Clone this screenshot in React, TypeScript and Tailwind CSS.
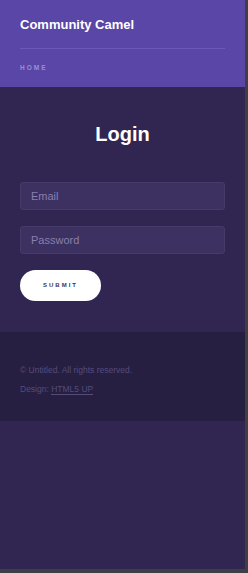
import React from "react";

export default function App() {
  return (
    <div
      className="h-[573px] w-[248px] flex flex-col bg-[#312651] border-r-[3px] border-b-[4px] border-[#3f3d45]"
      style={{ fontFamily: '"Liberation Sans", Arial, sans-serif' }}
    >
      {/* header */}
      <header className="h-[87px] shrink-0 bg-[#5a46a6] px-5 pt-[16px]">
        <h1 className="text-[13px] font-bold text-white leading-[18px]">Community Camel</h1>
        <div className="mt-[14px] h-px bg-[#6c58b6]" />
        <nav className="mt-[15px] leading-[8px]">
          <span className="block text-[6.5px] leading-[8px] font-bold tracking-[2px] text-[#9a8dd6]">HOME</span>
        </nav>
      </header>

      {/* login */}
      <main className="h-[245px] shrink-0 px-5 pt-[33px]">
        <h2 className="text-center text-[20px] font-bold text-white leading-[28px]">Login</h2>
        <form className="mt-[34px] flex flex-col gap-4" onSubmit={(e) => e.preventDefault()}>
          <input
            type="email"
            placeholder="Email"
            className="h-[28px] w-full rounded-[3px] border border-[#463b69] bg-[#3c3160] px-[10px] text-[11px] text-white placeholder:text-[#8a7fae] outline-none"
          />
          <input
            type="password"
            placeholder="Password"
            className="h-[28px] w-full rounded-[3px] border border-[#463b69] bg-[#3c3160] px-[10px] text-[11px] text-white placeholder:text-[#8a7fae] outline-none"
          />
          <div>
            <button
              type="submit"
              className="h-[31px] w-[81px] rounded-full bg-white text-[6px] font-bold tracking-[2px] text-[#3a3550]"
            >
              SUBMIT
            </button>
          </div>
        </form>
      </main>

      {/* footer */}
      <footer className="h-[89px] shrink-0 bg-[#261f42] px-5 pt-[33px] text-[8.5px] text-[#554c7a] leading-[11px]">
        <p>© Untitled. All rights reserved.</p>
        <p className="mt-[8px]">
          Design: <span className="border-b border-[#554c7a]">HTML5 UP</span>
        </p>
      </footer>

      <div className="flex-1" />
    </div>
  );
}
